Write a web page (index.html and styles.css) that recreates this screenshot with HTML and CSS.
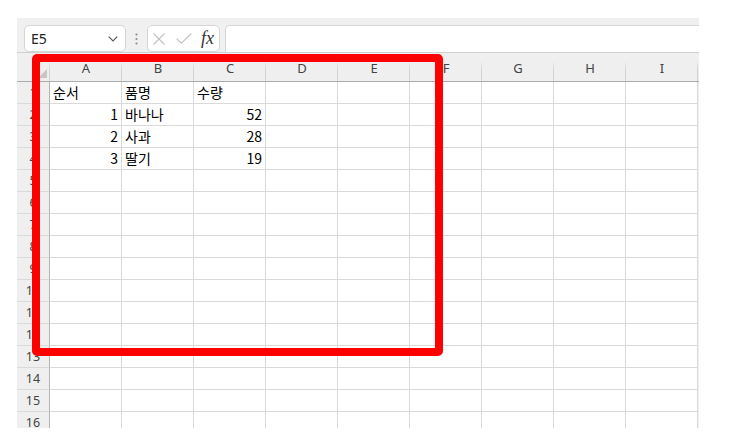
FILE: index.html
```html
<!DOCTYPE html>
<html lang="ko">
<head>
<meta charset="utf-8">
<title>Sheet</title>
<link rel="stylesheet" href="styles.css">
</head>
<body>
<div class="app">
  <div class="toolbar">
    <div class="namebox">
      <span class="ref">E5</span>
      <svg class="chev" width="10" height="6" viewBox="0 0 10 6"><path d="M0.7 0.7 L5 5 L9.3 0.7" fill="none" stroke="#555" stroke-width="1.1"/></svg>
    </div>
    <div class="grip">
      <svg width="3" height="12" viewBox="0 0 3 12"><circle cx="1.5" cy="1.5" r="1.1" fill="#8a8a8a"/><circle cx="1.5" cy="6" r="1.1" fill="#8a8a8a"/><circle cx="1.5" cy="10.5" r="1.1" fill="#8a8a8a"/></svg>
    </div>
    <div class="fxbox">
      <svg class="xicon" width="12" height="12" viewBox="0 0 12 12"><path d="M0.5 0.5 L11.5 11.5 M11.5 0.5 L0.5 11.5" fill="none" stroke="#c2c2c2" stroke-width="1.1"/></svg>
      <svg class="okicon" width="16" height="11" viewBox="0 0 16 11"><path d="M0.6 5.6 L5.3 10.2 L15.4 0.5" fill="none" stroke="#c2c2c2" stroke-width="1.1"/></svg>
      <span class="fx">fx</span>
    </div>
    <div class="formula"></div>
  </div>
  <div class="sheet">
    <div class="row head">
      <div class="corner"><span class="tri"></span></div>
      <div class="ch">A</div><div class="ch">B</div><div class="ch">C</div><div class="ch">D</div><div class="ch">E</div><div class="ch">F</div><div class="ch">G</div><div class="ch">H</div><div class="ch">I</div>
    </div>
    <div class="row"><div class="rh">1</div><div class="c">순서</div><div class="c">품명</div><div class="c">수량</div><div class="c"></div><div class="c"></div><div class="c"></div><div class="c"></div><div class="c"></div><div class="c"></div></div>
    <div class="row"><div class="rh">2</div><div class="c num">1</div><div class="c">바나나</div><div class="c num">52</div><div class="c"></div><div class="c"></div><div class="c"></div><div class="c"></div><div class="c"></div><div class="c"></div></div>
    <div class="row"><div class="rh">3</div><div class="c num">2</div><div class="c">사과</div><div class="c num">28</div><div class="c"></div><div class="c"></div><div class="c"></div><div class="c"></div><div class="c"></div><div class="c"></div></div>
    <div class="row"><div class="rh">4</div><div class="c num">3</div><div class="c">딸기</div><div class="c num">19</div><div class="c"></div><div class="c"></div><div class="c"></div><div class="c"></div><div class="c"></div><div class="c"></div></div>
    <div class="row"><div class="rh">5</div><div class="c"></div><div class="c"></div><div class="c"></div><div class="c"></div><div class="c"></div><div class="c"></div><div class="c"></div><div class="c"></div><div class="c"></div></div>
    <div class="row"><div class="rh">6</div><div class="c"></div><div class="c"></div><div class="c"></div><div class="c"></div><div class="c"></div><div class="c"></div><div class="c"></div><div class="c"></div><div class="c"></div></div>
    <div class="row"><div class="rh">7</div><div class="c"></div><div class="c"></div><div class="c"></div><div class="c"></div><div class="c"></div><div class="c"></div><div class="c"></div><div class="c"></div><div class="c"></div></div>
    <div class="row"><div class="rh">8</div><div class="c"></div><div class="c"></div><div class="c"></div><div class="c"></div><div class="c"></div><div class="c"></div><div class="c"></div><div class="c"></div><div class="c"></div></div>
    <div class="row"><div class="rh">9</div><div class="c"></div><div class="c"></div><div class="c"></div><div class="c"></div><div class="c"></div><div class="c"></div><div class="c"></div><div class="c"></div><div class="c"></div></div>
    <div class="row"><div class="rh">10</div><div class="c"></div><div class="c"></div><div class="c"></div><div class="c"></div><div class="c"></div><div class="c"></div><div class="c"></div><div class="c"></div><div class="c"></div></div>
    <div class="row"><div class="rh">11</div><div class="c"></div><div class="c"></div><div class="c"></div><div class="c"></div><div class="c"></div><div class="c"></div><div class="c"></div><div class="c"></div><div class="c"></div></div>
    <div class="row"><div class="rh">12</div><div class="c"></div><div class="c"></div><div class="c"></div><div class="c"></div><div class="c"></div><div class="c"></div><div class="c"></div><div class="c"></div><div class="c"></div></div>
    <div class="row"><div class="rh">13</div><div class="c"></div><div class="c"></div><div class="c"></div><div class="c"></div><div class="c"></div><div class="c"></div><div class="c"></div><div class="c"></div><div class="c"></div></div>
    <div class="row"><div class="rh">14</div><div class="c"></div><div class="c"></div><div class="c"></div><div class="c"></div><div class="c"></div><div class="c"></div><div class="c"></div><div class="c"></div><div class="c"></div></div>
    <div class="row"><div class="rh">15</div><div class="c"></div><div class="c"></div><div class="c"></div><div class="c"></div><div class="c"></div><div class="c"></div><div class="c"></div><div class="c"></div><div class="c"></div></div>
    <div class="row"><div class="rh">16</div><div class="c"></div><div class="c"></div><div class="c"></div><div class="c"></div><div class="c"></div><div class="c"></div><div class="c"></div><div class="c"></div><div class="c"></div></div>
  </div>
  <div class="highlight"></div>
</div>
</body>
</html>
```

FILE: styles.css
```css
html, body {
  margin: 0;
  padding: 0;
  background: #ffffff;
}

.app {
  position: relative;
  margin: 18px 0 0 17px;
  width: 682px;
  height: 410px;
  background: #f0f0f0;
  overflow: hidden;
  font-family: "Noto Sans", "Open Sans", sans-serif;
}

.toolbar {
  display: flex;
  align-items: flex-start;
  height: 34px;
  padding-top: 7px;
  box-sizing: border-box;
}

.namebox {
  margin-left: 7px;
  width: 102px;
  height: 27px;
  box-sizing: border-box;
  background: #fff;
  border: 1px solid #d6d6d6;
  border-radius: 5px;
  display: flex;
  align-items: center;
  justify-content: space-between;
  padding: 0 7px 0 6px;
}

.ref {
  font-size: 14px;
  color: #222;
  line-height: 1;
  margin-top: 1px;
}

.chev {
  display: block;
  margin-top: 1px;
}

.grip {
  width: 21px;
  height: 27px;
  display: flex;
  align-items: center;
  justify-content: center;
}

.grip svg {
  display: block;
  margin-left: -1px;
}

.fxbox {
  width: 73px;
  height: 27px;
  box-sizing: border-box;
  background: #fff;
  border: 1px solid #d6d6d6;
  border-radius: 5px;
  display: flex;
  align-items: center;
  padding-left: 5px;
}

.xicon {
  display: block;
}

.okicon {
  display: block;
  margin-left: 11px;
}

.fx {
  margin-left: 9px;
  font-family: "Liberation Serif", "DejaVu Serif", serif;
  font-style: italic;
  font-size: 18px;
  color: #333;
  line-height: 1;
  margin-top: -2px;
}

.formula {
  flex: 1;
  margin-left: 5px;
  height: 27px;
  box-sizing: border-box;
  background: #fff;
  border: 1px solid #d6d6d6;
  border-right: none;
  border-bottom: none;
  border-radius: 5px 0 0 0;
}

.sheet {
  display: flex;
  flex-direction: column;
}

.row {
  display: flex;
  height: 22px;
}

.row.head {
  height: 30px;
  box-sizing: border-box;
  border-top: 1px solid #d0d0d0;
  border-bottom: 1px solid #ababab;
  background: #efefef;
}

.corner {
  position: relative;
  width: 33px;
  flex: none;
}

.corner::after,
.ch::after {
  content: "";
  position: absolute;
  right: 0;
  top: 8px;
  bottom: 0;
  width: 1px;
  background: linear-gradient(#efefef, #d2d2d2 40%);
}

.tri {
  position: absolute;
  right: 3px;
  bottom: 3px;
  width: 0;
  height: 0;
  border-left: 9px solid transparent;
  border-bottom: 9px solid #c6c6c6;
}

.ch {
  position: relative;
  width: 72px;
  flex: none;
  text-align: center;
  font-size: 13px;
  color: #444;
  line-height: 28px;
  padding-top: 1px;
  box-sizing: border-box;
}

.rh {
  width: 33px;
  flex: none;
  box-sizing: border-box;
  background: #efefef;
  border-right: 1px solid #b4b4b4;
  border-bottom: 1px solid #dadada;
  text-align: center;
  font-size: 12.5px;
  color: #444;
  line-height: 22px;
}

.c {
  width: 72px;
  flex: none;
  box-sizing: border-box;
  background: #fff;
  border-right: 1px solid #dadada;
  border-bottom: 1px solid #dadada;
  padding: 0 3px 0 3px;
  font-family: "Noto Sans CJK KR", "Noto Sans", sans-serif;
  font-size: 14px;
  line-height: 21px;
  color: #000;
  white-space: nowrap;
  overflow: hidden;
}

.c.num {
  text-align: right;
}

.highlight {
  position: absolute;
  left: 15px;
  top: 36px;
  width: 411px;
  height: 302px;
  box-sizing: border-box;
  border: 8px solid #ff0000;
  border-radius: 5px;
}
```
